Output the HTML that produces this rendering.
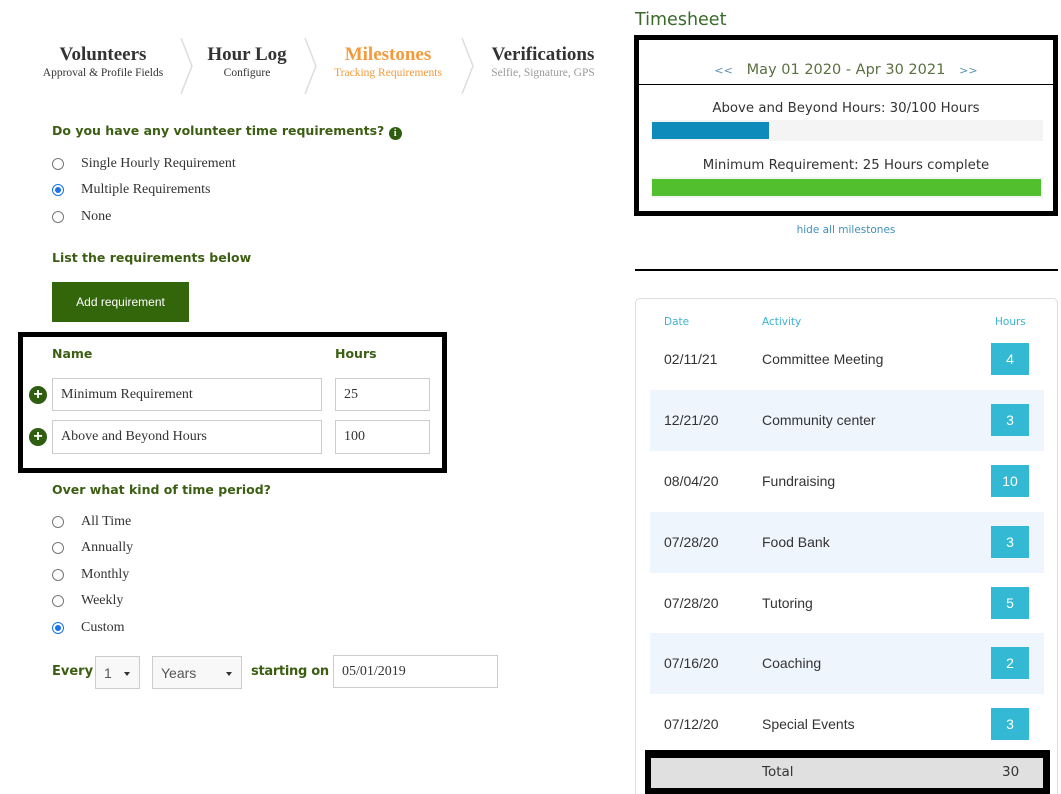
<!DOCTYPE html>
<html><head><meta charset="utf-8"><style>
*{margin:0;padding:0;box-sizing:border-box}
html,body{width:1061px;height:794px;overflow:hidden}
body{position:relative;background:#fff;font-family:"Liberation Sans",sans-serif}
.a{position:absolute;white-space:nowrap}
.st{font-family:"Liberation Serif",serif;text-align:center}
.st b{display:block;font-size:19px;color:#333}
.st span{display:block;font-size:11.5px;color:#333;margin-top:1px}
.g{color:#3b5e12;font-family:"DejaVu Sans",sans-serif;font-weight:bold;font-size:12.5px}
.rad{position:absolute;width:12px;height:12px;border:1px solid #777;border-radius:50%;background:#fff}
.rad.on{border:1px solid #1a73e8}
.rad.on::after{content:"";position:absolute;left:2px;top:2px;width:6px;height:6px;border-radius:50%;background:#1a73e8}
.lbl{font-family:"Liberation Serif",serif;font-size:14px;color:#333}
.inp{position:absolute;border:1px solid #ccc;background:#fff;font-family:"Liberation Serif",serif;font-size:14px;color:#333;padding-left:8px;display:flex;align-items:center}
.plus{position:absolute;width:18px;height:18px;border-radius:50%;background:#2f5e10;color:#fff;font:bold 16px/18px "Liberation Sans";text-align:center}
.sel{position:absolute;border:1px solid #ccc;background:#f8f8f8;font-size:14px;color:#555;padding-left:8px;display:flex;align-items:center}
.sel::after{content:"";position:absolute;right:9px;top:15px;border:3px solid transparent;border-top:4px solid #333}
.chev{position:absolute;width:14px;height:56px}
.row{position:absolute;left:650px;width:394px;height:61px;font-size:14px;color:#333}
.row.s{background:#eef5fd}
.row .d{position:absolute;left:14px;top:22px}
.row .t{position:absolute;left:112px;top:22px}
.row .h{position:absolute;left:341px;top:14px;width:38px;height:32px;background:#33b9d3;color:#fff;text-align:center;line-height:32px}
.ob{font-family:"DejaVu Sans",sans-serif}
</style></head><body>
<div class="a st" style="left:36px;top:44px;width:134px"><b>Volunteers</b><span>Approval &amp; Profile Fields</span></div>
<div class="a st" style="left:190px;top:44px;width:114px"><b>Hour Log</b><span>Configure</span></div>
<div class="a st" style="left:318px;top:44px;width:140px"><b style="color:#f39a3c">Milestones</b><span style="color:#f39a3c">Tracking Requirements</span></div>
<div class="a st" style="left:476px;top:44px;width:134px"><b>Verifications</b><span style="color:#999">Selfie, Signature, GPS</span></div>
<svg class="chev" style="left:180px;top:38px" viewBox="0 0 14 56"><path d="M1 0 L12 28 L1 56" fill="none" stroke="#ddd" stroke-width="1.5"/></svg>
<svg class="chev" style="left:304px;top:38px" viewBox="0 0 14 56"><path d="M1 0 L12 28 L1 56" fill="none" stroke="#ddd" stroke-width="1.5"/></svg>
<svg class="chev" style="left:461px;top:38px" viewBox="0 0 14 56"><path d="M1 0 L12 28 L1 56" fill="none" stroke="#ddd" stroke-width="1.5"/></svg>

<div class="a g" style="left:52px;top:123px">Do you have any volunteer time requirements? <span style="display:inline-block;width:13px;height:13px;border-radius:50%;background:#2f5e10;color:#fff;font:bold 10px/13px 'Liberation Serif';text-align:center;vertical-align:-1px">i</span></div>
<div class="rad" style="left:52px;top:158px"></div><div class="a lbl" style="left:81px;top:156px">Single Hourly Requirement</div>
<div class="rad on" style="left:52px;top:184px"></div><div class="a lbl" style="left:81px;top:182px">Multiple Requirements</div>
<div class="rad" style="left:52px;top:211px"></div><div class="a lbl" style="left:81px;top:209px">None</div>
<div class="a g" style="left:52px;top:250px">List the requirements below</div>
<div class="a" style="left:52px;top:282px;width:137px;height:40px;background:#33650a;color:#fff;font-size:12px;text-align:center;line-height:40px">Add requirement</div>

<div class="a" style="left:18px;top:332px;width:429px;height:141px;border:5px solid #000"></div>
<div class="a g" style="left:52px;top:346px">Name</div>
<div class="a g" style="left:335px;top:346px">Hours</div>
<div class="plus" style="left:29px;top:386px">+</div>
<div class="inp" style="left:52px;top:378px;width:270px;height:33px">Minimum Requirement</div>
<div class="inp" style="left:335px;top:378px;width:95px;height:33px">25</div>
<div class="plus" style="left:29px;top:428px">+</div>
<div class="inp" style="left:52px;top:420px;width:270px;height:34px">Above and Beyond Hours</div>
<div class="inp" style="left:335px;top:420px;width:95px;height:34px">100</div>

<div class="a g" style="left:52px;top:482px">Over what kind of time period?</div>
<div class="rad" style="left:52px;top:516px"></div><div class="a lbl" style="left:81px;top:514px">All Time</div>
<div class="rad" style="left:52px;top:542px"></div><div class="a lbl" style="left:81px;top:540px">Annually</div>
<div class="rad" style="left:52px;top:569px"></div><div class="a lbl" style="left:81px;top:567px">Monthly</div>
<div class="rad" style="left:52px;top:595px"></div><div class="a lbl" style="left:81px;top:593px">Weekly</div>
<div class="rad on" style="left:52px;top:622px"></div><div class="a lbl" style="left:81px;top:620px">Custom</div>
<div class="a g" style="left:52px;top:664px;font-size:13px">Every</div>
<div class="sel" style="left:95px;top:656px;width:45px;height:33px">1</div>
<div class="sel" style="left:152px;top:656px;width:90px;height:33px">Years</div>
<div class="a g" style="left:251px;top:664px;font-size:13px;letter-spacing:-0.3px">starting on</div>
<div class="inp" style="left:333px;top:655px;width:165px;height:33px">05/01/2019</div>

<div class="a ob" style="left:635px;top:10px;font-size:17.5px;color:#3a6a2a">Timesheet</div>
<div class="a" style="left:634px;top:35px;width:424px;height:181px;border:5px solid #000"></div>
<div class="a ob" style="left:639px;top:62px;width:414px;text-align:center;font-size:14.5px;color:#5a7040"><span style="font-size:11px;color:#5a8fb0">&lt;&lt;</span>&nbsp;&nbsp; May 01 2020 - Apr 30 2021 &nbsp;&nbsp;<span style="font-size:11px;color:#5a8fb0">&gt;&gt;</span></div>
<div class="a" style="left:639px;top:84px;width:414px;height:1px;background:#000"></div>
<div class="a ob" style="left:639px;top:101px;width:414px;text-align:center;font-size:13.3px;color:#333">Above and Beyond Hours: 30/100 Hours</div>
<div class="a" style="left:651px;top:120px;width:392px;height:21px;background:#f4f4f4"></div>
<div class="a" style="left:652px;top:122px;width:117px;height:17px;background:#0e8abb"></div>
<div class="a ob" style="left:639px;top:158px;width:414px;text-align:center;font-size:13.3px;color:#333">Minimum Requirement: 25 Hours complete</div>
<div class="a" style="left:651px;top:177px;width:392px;height:21px;background:#f4f4f4"></div>
<div class="a" style="left:652px;top:179px;width:389px;height:17px;background:#52bf2e"></div>
<div class="a ob" style="left:634px;top:224px;width:424px;text-align:center;font-size:10.5px;color:#3f8fb8">hide all milestones</div>
<div class="a" style="left:635px;top:269px;width:423px;height:2px;background:#000"></div>

<div class="a" style="left:635px;top:298px;width:423px;height:520px;border:1px solid #ddd;border-radius:5px"></div>
<div class="a ob" style="left:664px;top:316px;font-size:10.5px;color:#3cb4d0">Date</div>
<div class="a ob" style="left:762px;top:316px;font-size:10.5px;color:#3cb4d0">Activity</div>
<div class="a ob" style="left:995px;top:316px;font-size:10.5px;color:#3cb4d0">Hours</div>
<div class="row" style="top:329px"><span class="d">02/11/21</span><span class="t">Committee Meeting</span><span class="h">4</span></div>
<div class="row s" style="top:390px"><span class="d">12/21/20</span><span class="t">Community center</span><span class="h">3</span></div>
<div class="row" style="top:451px"><span class="d">08/04/20</span><span class="t">Fundraising</span><span class="h">10</span></div>
<div class="row s" style="top:512px"><span class="d">07/28/20</span><span class="t">Food Bank</span><span class="h">3</span></div>
<div class="row" style="top:573px"><span class="d">07/28/20</span><span class="t">Tutoring</span><span class="h">5</span></div>
<div class="row s" style="top:633px"><span class="d">07/16/20</span><span class="t">Coaching</span><span class="h">2</span></div>
<div class="row" style="top:694px"><span class="d">07/12/20</span><span class="t">Special Events</span><span class="h">3</span></div>
<div class="a" style="left:645px;top:750px;width:405px;height:50px;background:#000"></div>
<div class="a" style="left:651px;top:758px;width:392px;height:30px;background:#e0e0e0"></div>
<div class="a ob" style="left:762px;top:764px;font-size:13.5px;color:#333">Total</div>
<div class="a ob" style="left:1002px;top:764px;font-size:13.5px;color:#333">30</div>
</body></html>
